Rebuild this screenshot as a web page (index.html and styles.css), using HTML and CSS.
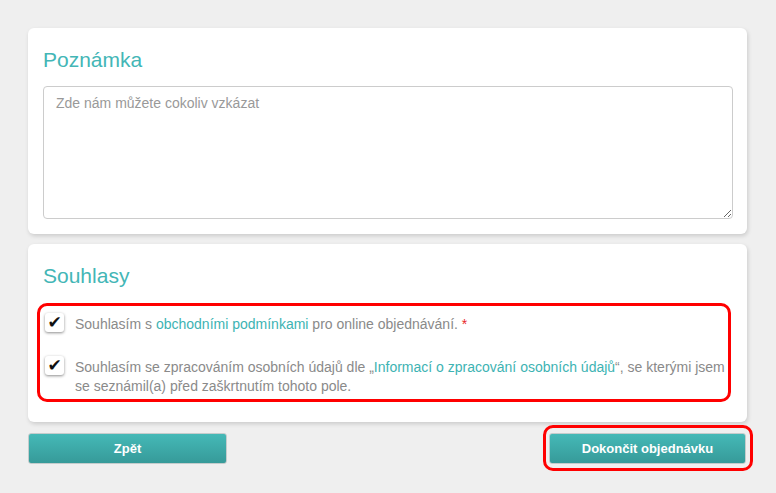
FILE: index.html
```html
<!DOCTYPE html>
<html lang="cs">
<head>
  <meta charset="UTF-8" />
  <title>Dokončení objednávky</title>
  <link rel="stylesheet" href="styles.css">
</head>
<body>
  <div class="page">
    <section class="card">
      <h2>Poznámka</h2>
      <textarea class="note" placeholder="Zde nám můžete cokoliv vzkázat"></textarea>
    </section>

    <section class="card consents-card">
      <h2>Souhlasy</h2>
      <div class="consents">
        <label class="consent first">
          <span class="check">&#10004;</span>
          Souhlasím s <a href="#">obchodními podmínkami</a> pro online objednávání. <span class="req">*</span>
        </label>
        <label class="consent">
          <span class="check">&#10004;</span>
          Souhlasím se zpracováním osobních údajů dle „<a href="#">Informací o zpracování osobních údajů</a>“, se kterými jsem se seznámil(a) před zaškrtnutím tohoto pole.
        </label>
      </div>
    </section>

    <div class="actions">
      <button class="btn back">Zpět</button>
      <div class="highlight">
        <button class="btn finish">Dokončit objednávku</button>
      </div>
    </div>
  </div>
</body>
</html>
```

FILE: styles.css
```css
* {
  margin: 0;
  padding: 0;
  box-sizing: border-box;
}

body {
  background: #efefef;
  font-family: "Liberation Sans", Arial, sans-serif;
}

.page {
  width: 719px;
  margin-left: 28px;
  padding: 28px 0 30px;
}

.card {
  background: #fff;
  border-radius: 6px;
  box-shadow: 1px 2px 4px rgba(0, 0, 0, 0.15);
  padding: 20px 14px 15px 15px;
}

.card + .card {
  margin-top: 10px;
}

h2 {
  font-size: 21px;
  line-height: 24px;
  font-weight: normal;
  color: #43b6b6;
}

.note {
  display: block;
  width: 100%;
  height: 133px;
  margin-top: 14px;
  padding: 7px 12px;
  border: 1px solid #ccc;
  border-radius: 4px;
  font-family: inherit;
  font-size: 14px;
  line-height: 18px;
  resize: vertical;
  outline: none;
}

.note::placeholder {
  color: #999;
}

.consents-card {
  padding-bottom: 20px;
}

.consents {
  margin: 15px 2px 0 -6px;
  padding: 9px 0 3px 5px;
  border: 3px solid #f00;
  border-radius: 10px;
}

.consent {
  display: block;
  position: relative;
  padding-left: 30px;
  font-size: 14px;
  line-height: 19px;
  color: #8a8a8a;
}

.consent.first {
  margin-bottom: 24px;
}

.consent a {
  color: #3db3b3;
  text-decoration: none;
}

.req {
  color: #e8262b;
}

.check {
  position: absolute;
  left: 0;
  top: -2px;
  width: 19px;
  height: 19px;
  background: #fff;
  border-radius: 3px;
  box-shadow: 0 1px 3px rgba(0, 0, 0, 0.45);
  color: #111;
  font-family: "DejaVu Sans", sans-serif;
  font-size: 17px;
  line-height: 19px;
  text-align: center;
}

.actions {
  display: flex;
  justify-content: space-between;
  align-items: flex-start;
  margin-top: 11px;
}

.btn {
  height: 31px;
  border: 1px solid #c4cccc;
  border-radius: 3px;
  background: linear-gradient(#45b9b7, #369a99);
  color: #fff;
  font-family: inherit;
  font-size: 13px;
  font-weight: bold;
  cursor: pointer;
}

.back {
  width: 199px;
}

.highlight {
  position: relative;
  margin-right: 1px;
}

.finish {
  display: block;
  width: 197px;
}

.highlight::after {
  content: "";
  position: absolute;
  top: -8px;
  left: -6px;
  right: -7px;
  bottom: -7px;
  border: 3px solid #f00;
  border-radius: 10px;
  pointer-events: none;
}
```
